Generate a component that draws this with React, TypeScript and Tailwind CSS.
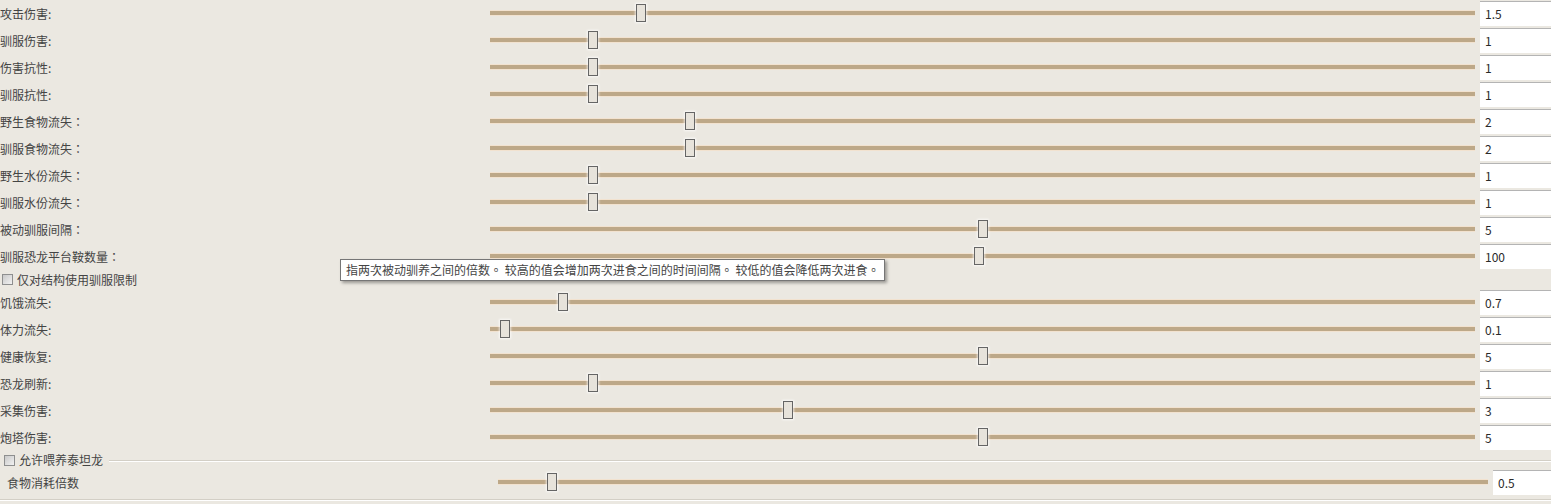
import React from "react";

type Item = { label: string; value: string; pos: number };

const topRows: Item[] = [
  { label: "攻击伤害:", value: "1.5", pos: 0.15 },
  { label: "驯服伤害:", value: "1", pos: 0.1 },
  { label: "伤害抗性:", value: "1", pos: 0.1 },
  { label: "驯服抗性:", value: "1", pos: 0.1 },
  { label: "野生食物流失：", value: "2", pos: 0.2 },
  { label: "驯服食物流失：", value: "2", pos: 0.2 },
  { label: "野生水份流失：", value: "1", pos: 0.1 },
  { label: "驯服水份流失：", value: "1", pos: 0.1 },
  { label: "被动驯服间隔：", value: "5", pos: 0.5 },
  { label: "驯服恐龙平台鞍数量：", value: "100", pos: 0.4965 },
];

const midRows: Item[] = [
  { label: "饥饿流失:", value: "0.7", pos: 0.07 },
  { label: "体力流失:", value: "0.1", pos: 0.01 },
  { label: "健康恢复:", value: "5", pos: 0.5 },
  { label: "恐龙刷新:", value: "1", pos: 0.1 },
  { label: "采集伤害:", value: "3", pos: 0.3 },
  { label: "炮塔伤害:", value: "5", pos: 0.5 },
];

function Slider({ pos, width }: { pos: number; width: number }) {
  // thumb is 10px wide, so travel is width - 10
  const left = Math.round(pos * (width - 10));
  return (
    <div className="relative h-full shrink-0" style={{ width }}>
      <div className="absolute left-0 right-0 top-[11px] h-[4px] bg-[#bda888] shadow-[0_1px_0_#f2e2cf,0_-1px_0_#f2e2cf]" />
      <div
        className="absolute top-[4px] w-[10px] h-[18px] bg-[#e7e3db] border border-[#656565] shadow-[0_0_2px_1px_rgba(255,255,255,0.7)]"
        style={{ left }}
      />
    </div>
  );
}

function ValueBox({ value, width }: { value: string; width: number }) {
  return (
    <div
      className="h-[25px] bg-white border-t border-[#b4b4b4] flex items-center pl-[5px] text-[12px] text-[#2a2a2a] shrink-0"
      style={{ width }}
    >
      {value}
    </div>
  );
}

function Row({ item }: { item: Item }) {
  // full-width colon sits centred in the TC glyph set, like the original
  const wide = item.label.endsWith("：");
  return (
    <div className="flex items-center h-[27px]">
      <div
        className={
          wide
            ? "w-[490px] shrink-0 text-[12px] text-[#444] leading-none font-['Noto_Sans_CJK_TC','Noto_Sans',sans-serif]"
            : "w-[490px] shrink-0 text-[12px] text-[#444] leading-none"
        }
      >
        {item.label}
      </div>
      <Slider pos={item.pos} width={985} />
      <div className="w-[5px] shrink-0" />
      <ValueBox value={item.value} width={71} />
    </div>
  );
}

function CheckBox() {
  return (
    <div className="w-[11px] h-[11px] border border-[#8e8f8f] bg-gradient-to-br from-[#c9c9c9] to-[#f2f2f2] shrink-0" />
  );
}

export default function App() {
  return (
    <div className="relative w-[1551px] h-[504px] overflow-hidden bg-[#ebe8e1] font-['Noto_Sans_CJK_SC','Noto_Sans',sans-serif]">
      {topRows.map((r) => (
        <Row key={r.label} item={r} />
      ))}

      <div className="flex items-center h-[19px] pl-[2px] gap-[4px]">
        <CheckBox />
        <span className="text-[12px] text-[#444] leading-none">仅对结构使用驯服限制</span>
      </div>

      {midRows.map((r) => (
        <Row key={r.label} item={r} />
      ))}

      {/* 泰坦龙 group */}
      <div className="flex items-center h-[18px]">
        <div className="flex items-center pl-[4px] gap-[4px] pr-[6px]">
          <CheckBox />
          <span className="text-[12px] text-[#444] leading-none">允许喂养泰坦龙</span>
        </div>
        <div className="flex-1 mt-[2px] border-t border-[#d3cfc6] border-b border-b-white" />
      </div>

      <div className="flex items-center h-[27px]">
        <div className="w-[498px] shrink-0 pl-[7px] text-[12px] text-[#444] leading-none">食物消耗倍数</div>
        <Slider pos={0.05} width={990} />
        <div className="w-[5px] shrink-0" />
        <ValueBox value="0.5" width={58} />
      </div>

      <div className="mt-[3px] border-t border-[#d3cfc6] border-b border-b-white" />

      {/* tooltip */}
      <div className="absolute left-[340px] top-[259px] h-[22px] px-[5px] flex items-center bg-white border border-[#767676] shadow-[2px_2px_3px_rgba(0,0,0,0.35)] text-[12px] text-[#444] whitespace-nowrap font-['Noto_Sans_CJK_TC','Noto_Sans',sans-serif]">
        指两次被动驯养之间的倍数。 较高的值会增加两次进食之间的时间间隔。 较低的值会降低两次进食。
      </div>
    </div>
  );
}
